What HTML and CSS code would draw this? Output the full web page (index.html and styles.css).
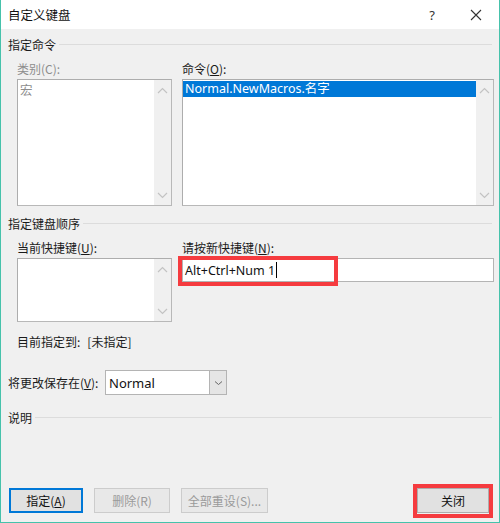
FILE: index.html
```html
<!DOCTYPE html>
<html lang="zh-CN">
<head>
<meta charset="utf-8">
<title>自定义键盘</title>
<link rel="stylesheet" href="styles.css">
</head>
<body>
<div class="window">
  <div class="titlebar">
    <span class="title">自定义键盘</span>
    <span class="tb-btn help">?</span>
    <span class="tb-btn close">
      <svg width="12" height="12" viewBox="0 0 12 12"><path d="M1 1 L11 11 M11 1 L1 11" stroke="#333" stroke-width="1.1" fill="none"/></svg>
    </span>
  </div>
  <div class="content">
    <div class="group-head"><span>指定命令</span><span class="rule"></span></div>
    <div class="cols top-cols">
      <div class="field">
        <div class="label disabled">类别(C):</div>
        <div class="listbox tall">
          <div class="items"><div class="item muted">宏</div></div>
          <div class="scroll">
            <svg class="chev" width="11" height="7" viewBox="0 0 11 7"><path d="M1 6 L5.5 1.5 L10 6" stroke="#c3c3c3" stroke-width="1.2" fill="none"/></svg>
            <svg class="chev" width="11" height="7" viewBox="0 0 11 7"><path d="M1 1 L5.5 5.5 L10 1" stroke="#c3c3c3" stroke-width="1.2" fill="none"/></svg>
          </div>
        </div>
      </div>
      <div class="field">
        <div class="label">命令(<u>O</u>):</div>
        <div class="listbox tall">
          <div class="items"><div class="item selected">Normal.NewMacros.名字</div></div>
          <div class="scroll">
            <svg class="chev" width="11" height="7" viewBox="0 0 11 7"><path d="M1 6 L5.5 1.5 L10 6" stroke="#c3c3c3" stroke-width="1.2" fill="none"/></svg>
            <svg class="chev" width="11" height="7" viewBox="0 0 11 7"><path d="M1 1 L5.5 5.5 L10 1" stroke="#c3c3c3" stroke-width="1.2" fill="none"/></svg>
          </div>
        </div>
      </div>
    </div>

    <div class="group-head second"><span>指定键盘顺序</span><span class="rule"></span></div>
    <div class="cols key-cols">
      <div class="field">
        <div class="label">当前快捷键(<u>U</u>):</div>
        <div class="listbox short">
          <div class="items"></div>
          <div class="scroll">
            <svg class="chev" width="11" height="7" viewBox="0 0 11 7"><path d="M1 6 L5.5 1.5 L10 6" stroke="#c3c3c3" stroke-width="1.2" fill="none"/></svg>
            <svg class="chev" width="11" height="7" viewBox="0 0 11 7"><path d="M1 1 L5.5 5.5 L10 1" stroke="#c3c3c3" stroke-width="1.2" fill="none"/></svg>
          </div>
        </div>
      </div>
      <div class="field">
        <div class="label">请按新快捷键(<u>N</u>):</div>
        <div class="input-wrap">
          <div class="textbox"><span class="latin">Alt+Ctrl+Num 1</span><span class="caret"></span></div>
          <span class="highlight input-mark"></span>
        </div>
      </div>
    </div>

    <div class="assigned"><span>目前指定到:</span><span class="assigned-val">[未指定]</span></div>

    <div class="save-row">
      <span class="save-label">将更改保存在(<u>V</u>):</span>
      <div class="combo">
        <span class="combo-text latin">Normal</span>
        <span class="combo-btn">
          <svg width="9" height="6" viewBox="0 0 9 6"><path d="M1 1.5 L4.5 4.5 L8 1.5" stroke="#666" stroke-width="1" fill="none"/></svg>
        </span>
      </div>
    </div>

    <div class="group-head third"><span>说明</span><span class="rule"></span></div>

    <div class="buttons">
      <span class="btn default">指定(<u>A</u>)</span>
      <span class="btn disabled-btn w-del">删除(R)</span>
      <span class="btn disabled-btn w-reset">全部重设(S)...</span>
      <span class="btn close-btn">关闭<span class="highlight btn-mark"></span></span>
    </div>
  </div>
</div>
</body>
</html>
```

FILE: styles.css
```css
html, body {
  margin: 0;
  padding: 0;
  background: #f0f0f0;
}

body {
  font-family: "Noto Sans CJK SC", "Noto Sans", sans-serif;
  font-size: 12px;
  color: #1a1a1a;
}

.latin {
  font-family: "Noto Sans", "Noto Sans CJK SC", sans-serif;
}

.window {
  width: 500px;
  height: 523px;
  box-sizing: border-box;
  border: 1px solid #46c2ab;
  border-top-width: 0;
  display: flex;
  flex-direction: column;
  overflow: hidden;
}

.titlebar {
  height: 29px;
  flex: none;
  background: #ffffff;
  display: flex;
  align-items: center;
  padding: 0 13px 0 7px;
}

.title {
  font-size: 12.5px;
  color: #111;
  line-height: 16px;
}

.tb-btn {
  width: 20px;
  height: 20px;
  display: flex;
  align-items: center;
  justify-content: center;
  color: #333;
}

.help {
  margin-left: auto;
  margin-right: 24px;
  font-family: "Noto Sans", sans-serif;
  font-size: 13px;
}

.content {
  flex: 1;
  display: flex;
  flex-direction: column;
  padding: 0 7px 9px 7px;
}

.group-head {
  display: flex;
  align-items: center;
  gap: 3px;
  line-height: 16px;
  margin-top: 8px;
}

.group-head .rule {
  flex: 1;
  height: 1px;
  background: #dcdcdc;
  margin-top: -1px;
}

.group-head.second {
  margin-top: 10px;
}

.group-head.third {
  margin-top: 15px;
}

.cols {
  display: grid;
  grid-template-columns: 155px 312px;
  column-gap: 10px;
  margin-left: 9px;
  margin-top: 8px;
}

.label {
  line-height: 16px;
  margin-bottom: 2px;
  color: #1a1a1a;
}

.label.disabled {
  color: #8d8d8d;
}

.listbox {
  box-sizing: border-box;
  border: 1px solid #adadad;
  border-right-color: #b8b8b8;
  border-bottom-color: #b8b8b8;
  background: #fff;
  display: flex;
}

.listbox.tall {
  height: 127px;
}

.listbox.short {
  height: 64px;
}

.items {
  flex: 1;
  padding-top: 1px;
}

.item {
  height: 16px;
  line-height: 16px;
  padding-left: 2px;
  font-size: 12.5px;
}

.item.muted {
  color: #8d8d8d;
  padding-left: 2px;
  padding-top: 1px;
}

.item.selected {
  background: #0078d7;
  color: #ffffff;
  font-family: "Noto Sans", "Noto Sans CJK SC", sans-serif;
  font-size: 12.5px;
}

.scroll {
  width: 17px;
  background: #f0f0f0;
  display: flex;
  flex-direction: column;
  justify-content: space-between;
  align-items: center;
  padding: 7px 0 6px;
}

.chev {
  display: block;
}

.input-wrap {
  position: relative;
}

.textbox {
  box-sizing: border-box;
  height: 24px;
  border: 1px solid #b4b4b4;
  background: #fff;
  display: flex;
  align-items: center;
  padding-left: 2px;
  font-size: 12.5px;
  color: #111;
}

.caret {
  width: 1px;
  height: 16px;
  background: #000;
  margin-left: 1px;
}

.highlight {
  position: absolute;
  border: 4px solid #f53b3f;
  box-sizing: border-box;
}

.input-mark {
  left: -4px;
  top: -2px;
  width: 160px;
  height: 30px;
}

.assigned {
  margin-left: 9px;
  margin-top: 12px;
  line-height: 16px;
  display: flex;
  gap: 7px;
}

.save-row {
  display: flex;
  align-items: center;
  margin-top: 20px;
}

.save-label {
  width: 97px;
  line-height: 16px;
}

.combo {
  box-sizing: border-box;
  width: 122px;
  height: 25px;
  border: 1px solid #b4b4b4;
  background: #fff;
  display: flex;
  align-items: stretch;
}

.combo-text {
  flex: 1;
  display: flex;
  align-items: center;
  padding-left: 3px;
  font-size: 13px;
  color: #111;
}

.combo-btn {
  width: 16px;
  background: #e5e5e5;
  border-left: 1px solid #b4b4b4;
  display: flex;
  align-items: center;
  justify-content: center;
}

.buttons {
  margin-top: auto;
  display: flex;
  gap: 11px;
  padding-left: 1px;
}

.btn {
  box-sizing: border-box;
  height: 25px;
  width: 74px;
  border: 1px solid #adadad;
  background: #e1e1e1;
  display: flex;
  align-items: center;
  justify-content: center;
  color: #111;
  position: relative;
}

.btn.default {
  border-color: #0078d7;
  box-shadow: inset 0 0 0 1px #0078d7;
}

.btn.disabled-btn {
  background: #e8e8e8;
  border-color: #cccccc;
  color: #9a9a9a;
}

.w-del {
  width: 76px;
}

.w-reset {
  width: 87px;
}

.close-btn {
  margin-left: auto;
  margin-right: 3px;
  width: 72px;
}

.btn-mark {
  left: -5px;
  top: -5px;
  right: -5px;
  bottom: -6px;
}
```
